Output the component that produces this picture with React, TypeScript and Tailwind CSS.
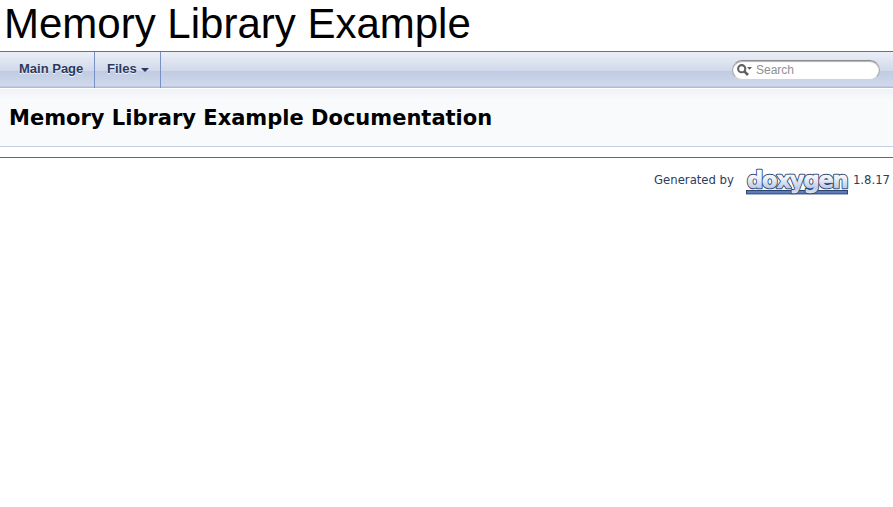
function Logo() {
  return (
    <svg width="104" height="31" viewBox="0 0 104 31" className="ml-[11px] block overflow-visible" aria-label="doxygen">
      <defs>
        <linearGradient id="letters" gradientUnits="userSpaceOnUse" x1="0" y1="3" x2="0" y2="27">
          <stop offset="0" stopColor="#ffffff" />
          <stop offset="0.35" stopColor="#edf1f9" />
          <stop offset="0.75" stopColor="#bccaea" />
          <stop offset="1" stopColor="#dfe6f4" />
        </linearGradient>
      </defs>
      <rect x="1.5" y="23.5" width="101" height="3.4" fill="#5b7cbd" stroke="#2c4470" />
      <text
        x="2"
        y="21"
        fill="url(#letters)"
        stroke="#33486f"
        strokeWidth="2.5"
        strokeLinejoin="round"
        paintOrder="stroke"
        className="font-['DejaVu_Sans',sans-serif] text-[22.6px] font-bold tracking-[-1.15px]"
      >
        doxygen
      </text>
      <text
        x="2"
        y="21"
        fill="url(#letters)"
        stroke="url(#letters)"
        strokeWidth="0.35"
        aria-hidden="true"
        className="font-['DejaVu_Sans',sans-serif] text-[22.6px] font-bold tracking-[-1.15px]"
      >
        doxygen
      </text>
    </svg>
  );
}

function SearchBox() {
  return (
    <div className="mr-[13px] mt-2 flex h-[20px] w-[148px] items-start rounded-full border border-x-[#a6a8ae] border-t-[#8a8b8e] border-b-[#d0d3da] bg-white shadow-[inset_0_1px_1px_rgba(0,0,0,0.3)]">
      <svg width="16" height="14" viewBox="0 0 16 14" className="mt-[3px] ml-1 block">
        <circle cx="4.7" cy="4.7" r="3.6" fill="none" stroke="#606060" strokeWidth="2.1" />
        <path d="M7.3 7.3 L11 11" stroke="#606060" strokeWidth="2.6" />
        <path d="M10 3 H15 L12.5 5.8 Z" fill="#606060" />
      </svg>
      <span className="mt-px ml-[3px] text-[12px] leading-[16px] text-[#909090]">Search</span>
    </div>
  );
}

export default function App() {
  return (
    <main className="h-[507px] overflow-hidden bg-white font-['Liberation_Sans',Arial,sans-serif] text-black">
      <header className="h-[51px] pl-1 text-[42px] leading-[47px] whitespace-nowrap">Memory Library Example</header>
      <nav className="flex h-[37px] justify-between border-t border-[#5373b4] bg-[linear-gradient(to_bottom,#ebeff6_0px,#d0d8ea_19px,#bfcbe3_19px,#d1d9eb_34px,#adbbd8_35px,#adbbd8_36px)]">
        <div className="flex text-[13px] leading-[34px] font-bold text-[#283a5d] [text-shadow:0px_1px_1px_rgba(255,255,255,0.9)]">
          <a className="w-[95px] border-r border-[#7790c5] pl-[19px]">Main Page</a>
          <a className="flex w-[66px] border-r border-[#7790c5] pl-3">
            <span>Files</span>
            <svg width="8" height="4" viewBox="0 0 8 4" className="mt-4 ml-1 block"><path d="M0 0 H8 L4 4 Z" fill="#283a5d" /></svg>
          </a>
        </div>
        <SearchBox />
      </nav>
      <section className="h-[59px] border-b border-[#c4cfe5] bg-[linear-gradient(to_bottom,#ffffff_0px,#ffffff_1px,#eff2f8_1px,#f9fafc_12px)] pl-[9px] font-['DejaVu_Sans',sans-serif] text-[21px] leading-[61px] font-bold whitespace-nowrap">
        Memory Library Example Documentation
      </section>
      <hr className="mt-[10px] border-t border-[#4a6aaa]" />
      <footer className="mt-[9px] flex justify-end pr-[3px] font-['DejaVu_Sans',sans-serif] text-[11.67px] leading-[26px] text-[#2a3d61]">
        <span>Generated by</span>
        <Logo />
        <span className="ml-1">1.8.17</span>
      </footer>
    </main>
  );
}
